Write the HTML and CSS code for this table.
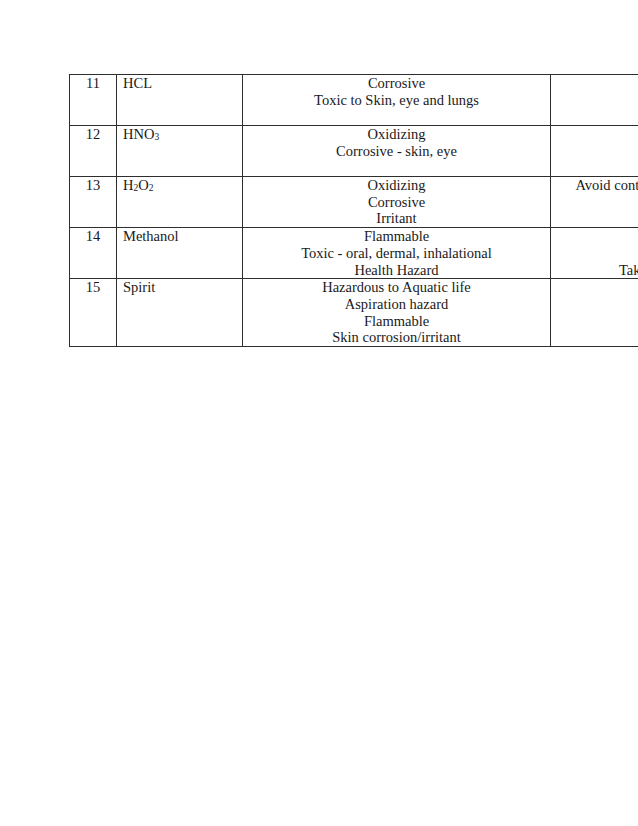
FILE: index.html
```html
<!DOCTYPE html>
<html>
<head>
<meta charset="utf-8">
<link rel="stylesheet" href="styles.css">
</head>
<body>
<div class="page">
  <table class="hazards">
    <colgroup>
      <col class="c-no">
      <col class="c-name">
      <col class="c-hazard">
      <col class="c-prec">
    </colgroup>
    <tr class="r3">
      <td class="no">11</td>
      <td class="name">HCL</td>
      <td class="hz">Corrosive<br>Toxic to Skin, eye and lungs</td>
      <td class="pc"></td>
    </tr>
    <tr class="r3">
      <td class="no">12</td>
      <td class="name">HNO<span class="sub">3</span></td>
      <td class="hz">Oxidizing<br>Corrosive - skin, eye</td>
      <td class="pc"></td>
    </tr>
    <tr class="r3">
      <td class="no">13</td>
      <td class="name">H<span class="sub">2</span>O<span class="sub">2</span></td>
      <td class="hz">Oxidizing<br>Corrosive<br>Irritant</td>
      <td class="pc">Avoid contact with skin, eyes and clothing.</td>
    </tr>
    <tr class="r3">
      <td class="no">14</td>
      <td class="name">Methanol</td>
      <td class="hz">Flammable<br>Toxic - oral, dermal, inhalational<br>Health Hazard</td>
      <td class="pc"><br><br>Take precautionary measure</td>
    </tr>
    <tr class="r4">
      <td class="no">15</td>
      <td class="name">Spirit</td>
      <td class="hz">Hazardous to Aquatic life<br>Aspiration hazard<br>Flammable<br>Skin corrosion/irritant</td>
      <td class="pc"></td>
    </tr>
  </table>
</div>
</body>
</html>
```
FILE: styles.css
```css
html, body {
  margin: 0;
  padding: 0;
  background: #ffffff;
}

.page {
  width: 638px;
  height: 826px;
  overflow: hidden;
  padding: 74px 0 0 69px;
  box-sizing: border-box;
}

.hazards {
  border-collapse: collapse;
  table-layout: fixed;
  width: 781px;
  font-family: "Liberation Serif", "Times New Roman", serif;
  font-size: 14.5px;
  line-height: 16.7px;
  color: #1a1a1a;
}

.c-no { width: 47px; }
.c-name { width: 126px; }
.c-hazard { width: 308px; }
.c-prec { width: 300px; }

.hazards td {
  border: 1px solid #2e2e2e;
  padding: 0;
  vertical-align: top;
}

.r3 td { height: 50px; }
.r4 td { height: 67px; }

.no {
  text-align: center;
}

.name {
  text-align: left;
  padding-left: 6px !important;
}

.hz,
.pc {
  text-align: center;
  white-space: nowrap;
}

.sub {
  font-size: 9.5px;
  vertical-align: -1px;
  line-height: 1;
}
```
